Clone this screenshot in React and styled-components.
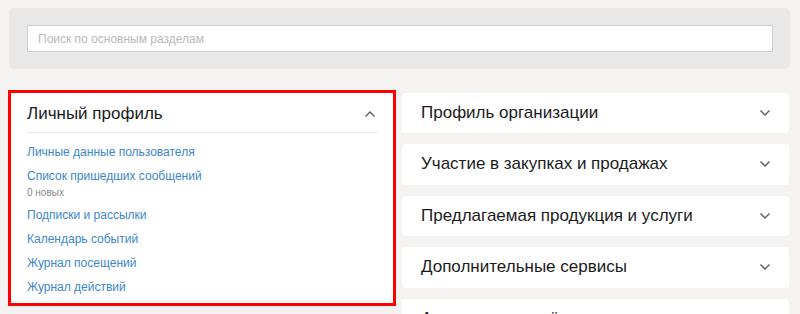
import React from "react";
import styled, { createGlobalStyle } from "styled-components";

const Global = createGlobalStyle`
  html, body { margin: 0; padding: 0; background: #f4f3f1; }
  body { font-family: "Liberation Sans", Arial, sans-serif; overflow: hidden; }
  * { box-sizing: border-box; }
`;

const Page = styled.div`
  width: 800px;
  height: 314px;
  padding: 8px 10px 0 9px;
  background: #f4f3f1;
`;

const SearchPanel = styled.div`
  width: 781px;
  height: 61px;
  background: #e8e8e8;
  border-radius: 5px;
  padding: 17px 17px 0 18px;
`;

const SearchInput = styled.input`
  display: block;
  width: 100%;
  height: 27px;
  border: 1px solid #cfcfcf;
  background: #fff;
  padding: 0 10px;
  font-family: "Liberation Sans", Arial, sans-serif;
  font-size: 12px;
  color: #333;
  outline: none;
  &::placeholder { color: #b9b9b9; }
`;

const Columns = styled.div`
  display: grid;
  grid-template-columns: 388px 387px;
  column-gap: 6px;
  margin-top: 21px;
  margin-left: -1px;
  align-items: start;
`;

const ProfileCard = styled.section`
  background: #fff;
  border: 3px solid #ff0000;
  padding: 0 15px 5px 16px;
  height: 216px;
`;

const CardHeader = styled.div`
  display: flex;
  align-items: center;
  justify-content: space-between;
  height: 40px;
  border-bottom: 1px solid #e8e8e8;
  padding-top: 2px;
`;

const Title = styled.h2`
  margin: 0;
  font-family: "Liberation Sans", Arial, sans-serif;
  font-weight: 400;
  font-size: 17px;
  color: #1b1b1b;
`;

const ChevronWrap = styled.span`
  display: flex;
  width: 12px;
  height: 8px;
  margin-right: ${(p) => p.$mr || 0}px;
`;

const LinkList = styled.ul`
  list-style: none;
  margin: 0;
  padding: 7px 0 0;
`;

const LinkItem = styled.li`
  display: flex;
  flex-direction: column;
`;

const NavLink = styled.a`
  font-size: 12px;
  line-height: 24px;
  color: #3b87c9;
  text-decoration: none;
`;

const Sub = styled.span`
  font-size: 10px;
  line-height: 14px;
  color: #8a8a8a;
  margin-top: -2px;
  margin-bottom: 3px;
`;

const RightCol = styled.div`
  display: flex;
  flex-direction: column;
  gap: 11px;
  padding-top: 2.5px;
`;

const SectionCard = styled.div`
  background: #fff;
  border-radius: 4px;
  height: 40.5px;
  display: flex;
  align-items: center;
  justify-content: space-between;
  padding: 0 18px 0 19px;
`;

const Chevron = ({ up, mr }) => (
  <ChevronWrap $mr={mr}>
    <svg width="12" height="8" viewBox="0 0 12 8">
      <path
        d={up ? "M1.5 6.5 L6 2 L10.5 6.5" : "M1.5 1.5 L6 6 L10.5 1.5"}
        fill="none"
        stroke="#5c5c5c"
        strokeWidth="1.4"
      />
    </svg>
  </ChevronWrap>
);

const links = [
  { t: "Личные данные пользователя" },
  { t: "Список пришедших сообщений", sub: "0 новых" },
  { t: "Подписки и рассылки" },
  { t: "Календарь событий" },
  { t: "Журнал посещений" },
  { t: "Журнал действий" },
];

const sections = [
  "Профиль организации",
  "Участие в закупках и продажах",
  "Предлагаемая продукция и услуги",
  "Дополнительные сервисы",
  "Аналитика и отчёты",
];

export default function App() {
  return (
    <Page>
      <Global />
      <SearchPanel>
        <SearchInput placeholder="Поиск по основным разделам" />
      </SearchPanel>
      <Columns>
        <ProfileCard>
          <CardHeader>
            <Title>Личный профиль</Title>
            <Chevron up mr={2} />
          </CardHeader>
          <LinkList>
            {links.map((l) => (
              <LinkItem key={l.t}>
                <NavLink href="#">{l.t}</NavLink>
                {l.sub && <Sub>{l.sub}</Sub>}
              </LinkItem>
            ))}
          </LinkList>
        </ProfileCard>
        <RightCol>
          {sections.map((s) => (
            <SectionCard key={s}>
              <Title>{s}</Title>
              <Chevron />
            </SectionCard>
          ))}
        </RightCol>
      </Columns>
    </Page>
  );
}
